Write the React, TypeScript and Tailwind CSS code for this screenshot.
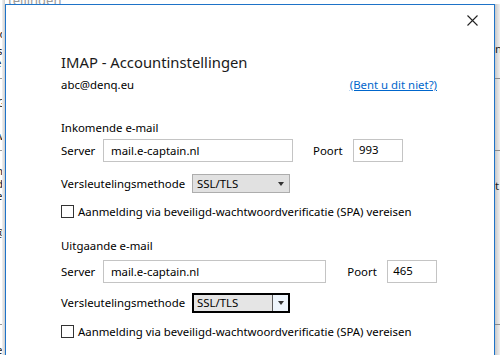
import React from 'react'

const font = { fontFamily: '"Noto Sans", "Open Sans", Arial, sans-serif' }

function Select({ focused }: { focused?: boolean }) {
  if (focused) {
    return (
      <div className="flex h-[20px] w-[98px] items-stretch border-2 border-black bg-[#e5e5e5]">
        <span className="flex-1 pl-[3px] leading-[16px]">SSL/TLS</span>
        <span className="flex w-[16px] items-center justify-center border-l border-[#5a5a5a] bg-[#eef5fc]">
          <span className="h-0 w-0 border-x-[3.5px] border-t-[4px] border-x-transparent border-t-[#333]" />
        </span>
      </div>
    )
  }
  return (
    <div className="flex h-[19px] w-[98px] items-center border border-[#adadad] bg-[#e1e1e1]">
      <span className="flex-1 pl-[4px]">SSL/TLS</span>
      <span className="mr-[5px] h-0 w-0 border-x-[3.5px] border-t-[4px] border-x-transparent border-t-[#333]" />
    </div>
  )
}

function Section(props: {
  title: string
  serverWidth: string
  poortGap: string
  port: string
  focused?: boolean
  headGap: string
  selectGap: string
}) {
  return (
    <div className="flex flex-col">
      <div className="h-[16px] leading-[16px]">{props.title}</div>
      <div className={`flex h-[23px] items-center ${props.headGap}`}>
        <span className="w-[42px]">Server</span>
        <div className={`flex h-[23px] ${props.serverWidth} items-center border border-[#c4c4c4] pl-[7px]`}>
          mail.e-captain.nl
        </div>
        <span className={`w-[40px] ${props.poortGap}`}>Poort</span>
        <div className="flex h-[23px] w-[50px] items-start border border-[#c4c4c4] pl-[5px] pt-[1px]">
          {props.port}
        </div>
      </div>
      <div className={`flex items-center ${props.selectGap}`}>
        <span className="w-[131px]">Versleutelingsmethode</span>
        <Select focused={props.focused} />
      </div>
      <div className="mt-[12px] flex h-[13px] items-center">
        <span className="h-[13px] w-[13px] border border-[#333] bg-white" />
        <span className="ml-[4px]">Aanmelding via beveiligd-wachtwoordverificatie (SPA) vereisen</span>
      </div>
    </div>
  )
}

export default function App() {
  return (
    <div
      className="relative h-[355px] w-[500px] overflow-hidden bg-white text-[11.4px] text-black"
      style={font}
    >
      {/* window behind the dialog */}
      <div className="absolute left-0 top-0 h-full w-[500px] leading-[12px] text-[#1a1a1a]">
        <span className="absolute left-[8px] top-[-6px] text-[13px] text-[#9a9a9a]">tellingen</span>
        <span className="absolute left-[-6px] top-[28px]">co</span>
        <span className="absolute left-[-3px] top-[45px]">s</span>
        <span className="absolute left-[-5px] top-[57px]">el</span>
        <span className="absolute left-0 top-[78px] h-px w-[5px] bg-[#9a9a9a]" />
        <span className="absolute left-[-3px] top-[97px]">G</span>
        <span className="absolute left-[-5px] top-[130px]">w</span>
        <span className="absolute left-0 top-[150px] h-px w-[5px] bg-[#9a9a9a]" />
        <span className="absolute left-[-4px] top-[165px]">n</span>
        <span className="absolute left-[-4px] top-[178px]">d</span>
        <span className="absolute left-[-4px] top-[190px]">e</span>
        <span className="absolute left-[-6px] top-[227px]">@</span>
        <span className="absolute left-0 top-[324px] h-px w-[5px] bg-[#9a9a9a]" />
        <span className="absolute left-[-4px] top-[344px]">e</span>
        <span className="absolute left-[2px] top-0 h-full w-[3px] bg-gradient-to-r from-[#f2f2f2] to-[#cfcfcf]" />

        <span className="absolute right-0 top-[4px] h-full w-[5px] bg-gradient-to-r from-[#c8c8c8] to-[#f0f0f0]" />
        <span className="absolute left-[495px] top-[43px]">n</span>
        <span className="absolute left-[495px] top-[78px] h-px w-[5px] bg-[#8a8a8a]" />
        <span className="absolute left-[495px] top-[150px] h-px w-[5px] bg-[#8a8a8a]" />
        <span className="absolute left-[495px] top-[180px]">t</span>
        <span className="absolute left-[495px] top-[324px] h-px w-[5px] bg-[#8a8a8a]" />
      </div>

      {/* dialog */}
      <div className="absolute left-[5px] top-[4px] flex h-[370px] w-[490px] flex-col border border-[#1e73c8] bg-white pl-[55px] pr-[57px]">
        <button className="absolute left-[460px] top-[9px] flex h-[12px] w-[12px] items-center justify-center">
          <svg width="11" height="11" viewBox="0 0 11 11">
            <path d="M0.5 0.5 L10.5 10.5 M10.5 0.5 L0.5 10.5" stroke="#222" strokeWidth="1.1" />
          </svg>
        </button>

        <div className="mt-[47px] h-[20px] text-[14.8px] leading-[20px] text-[#1a1a1a]">
          IMAP - Accountinstellingen
        </div>
        <div className="mt-[5px] flex h-[16px] items-center justify-between leading-[16px]">
          <span>abc@denq.eu</span>
          <span className="text-[#0066cc] underline">(Bent u dit niet?)</span>
        </div>

        <div className="mt-[27px]">
          <Section
            title="Inkomende e-mail"
            serverWidth="w-[190px]"
            poortGap="ml-[20px]"
            port="993"
            headGap="mt-[3px]"
            selectGap="mt-[12px] h-[19px]"
          />
        </div>
        <div className="mt-[20px]">
          <Section
            title="Uitgaande e-mail"
            serverWidth="w-[224px]"
            poortGap="ml-[21px]"
            port="465"
            focused
            headGap="mt-[6px]"
            selectGap="mt-[10px] h-[20px]"
          />
        </div>
      </div>
    </div>
  )
}
